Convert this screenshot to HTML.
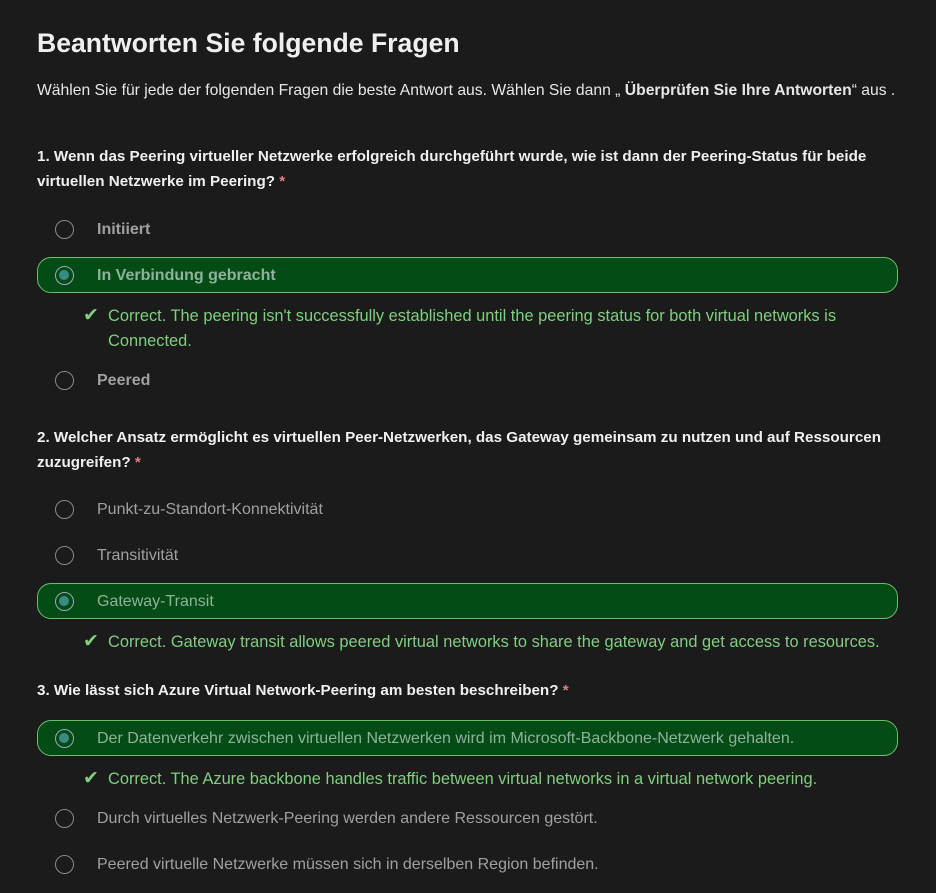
<!DOCTYPE html>
<html><head><meta charset="utf-8"><style>
body{margin:0;width:936px;height:893px;background:#1b1b1b;font-family:"Liberation Sans",sans-serif;color:#e6e6e6;position:relative;overflow:hidden}
.a{position:absolute;white-space:nowrap;line-height:20px}
h1{position:absolute;left:37px;top:25px;margin:0;font-size:26.6px;font-weight:bold;color:#f0f0f0;line-height:36px}
.q{font-weight:bold;font-size:15.2px;color:#f0f0f0}
.q span{color:#e08080}
.opt{color:#a0a0a0;font-size:16px}
.b{font-weight:bold}
.r{position:absolute;width:19px;height:19px;border:1.5px solid #8a8a8a;border-radius:50%;box-sizing:border-box}
.sel{position:absolute;left:37px;width:861px;height:36px;background:#054b16;border:1px solid #6cbd6c;border-radius:14px;box-sizing:border-box}
.sel .r{left:17px;top:8px;border-color:#9ab}
.sel .r:after{content:"";position:absolute;left:3px;top:3px;width:10px;height:10px;border-radius:50%;background:#3a8a88}
.sel .t{position:absolute;left:59px;top:8px;color:#8fb29a;font-size:16px;line-height:20px;white-space:nowrap}
.fb{color:#7fcf7f;font-size:16.4px;left:108px}
.ck{position:absolute;color:#7fcf7f;font-size:19px;left:83px}
</style></head><body>
<h1>Beantworten Sie folgende Fragen</h1>
<div class="a" style="left:37px;top:81px;font-size:15.7px">Wählen Sie für jede der folgenden Fragen die beste Antwort aus. Wählen Sie dann „ <b>Überprüfen Sie Ihre Antworten</b>“ aus .</div>

<div class="a q" style="left:37px;top:147px">1. Wenn das Peering virtueller Netzwerke erfolgreich durchgeführt wurde, wie ist dann der Peering-Status für beide</div>
<div class="a q" style="left:37px;top:172px">virtuellen Netzwerke im Peering? <span>*</span></div>
<div class="r" style="left:55px;top:220px"></div><div class="a opt b" style="left:97px;top:220px">Initiiert</div>
<div class="sel" style="top:257px"><div class="r"></div><div class="t b">In Verbindung gebracht</div></div>
<div class="ck" style="top:304px">✔</div>
<div class="a fb" style="top:306px">Correct. The peering isn't successfully established until the peering status for both virtual networks is</div>
<div class="a fb" style="top:331px">Connected.</div>
<div class="r" style="left:55px;top:371px"></div><div class="a opt b" style="left:97px;top:371px">Peered</div>

<div class="a q" style="left:37px;top:428px">2. Welcher Ansatz ermöglicht es virtuellen Peer-Netzwerken, das Gateway gemeinsam zu nutzen und auf Ressourcen</div>
<div class="a q" style="left:37px;top:453px">zuzugreifen? <span>*</span></div>
<div class="r" style="left:55px;top:500px"></div><div class="a opt" style="left:97px;top:500px">Punkt-zu-Standort-Konnektivität</div>
<div class="r" style="left:55px;top:546px"></div><div class="a opt" style="left:97px;top:546px">Transitivität</div>
<div class="sel" style="top:583px"><div class="r"></div><div class="t">Gateway-Transit</div></div>
<div class="ck" style="top:630px">✔</div>
<div class="a fb" style="top:632px">Correct. Gateway transit allows peered virtual networks to share the gateway and get access to resources.</div>

<div class="a q" style="left:37px;top:681px">3. Wie lässt sich Azure Virtual Network-Peering am besten beschreiben? <span>*</span></div>
<div class="sel" style="top:720px"><div class="r"></div><div class="t">Der Datenverkehr zwischen virtuellen Netzwerken wird im Microsoft-Backbone-Netzwerk gehalten.</div></div>
<div class="ck" style="top:767px">✔</div>
<div class="a fb" style="top:769px">Correct. The Azure backbone handles traffic between virtual networks in a virtual network peering.</div>
<div class="r" style="left:55px;top:809px"></div><div class="a opt" style="left:97px;top:809px">Durch virtuelles Netzwerk-Peering werden andere Ressourcen gestört.</div>
<div class="r" style="left:55px;top:855px"></div><div class="a opt" style="left:97px;top:855px">Peered virtuelle Netzwerke müssen sich in derselben Region befinden.</div>
</body></html>
